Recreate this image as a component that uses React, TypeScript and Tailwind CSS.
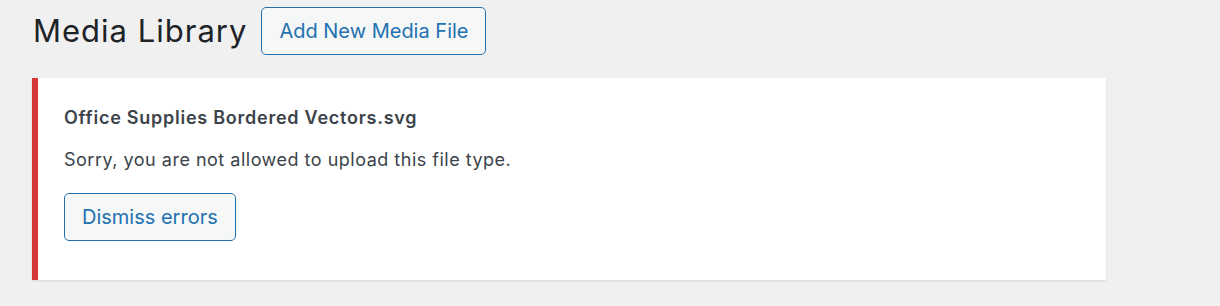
export default function App() {
  return (
    <div
      className="min-h-[306px] w-full bg-[#f0f0f1] pl-[32px] pr-[114px] pt-[7px]"
      style={{ fontFamily: 'Inter, "Liberation Sans", Arial, sans-serif' }}
    >
      <div className="flex items-start gap-[14px]">
        <h1 className="ml-[1px] text-[31px] leading-[47px] tracking-[1px] font-normal text-[#1d2327]">
          Media Library
        </h1>
        <button className="h-[48px] rounded-[5px] border border-[#2271b1] bg-[#f6f7f7] px-[17px] text-[20px] text-[#2271b1]">
          Add New Media File
        </button>
      </div>

      <div className="mt-[23px] border-l-[6px] border-[#d63638] bg-white pb-[39px] pl-[26px] pt-[28px] shadow-[0_1px_2px_rgba(0,0,0,0.1)]">
        <p className="text-[18px] leading-[24px] tracking-[0.75px] font-semibold text-[#3c434a]">
          Office Supplies Bordered Vectors.svg
        </p>
        <p className="mt-[18px] text-[18px] leading-[24px] tracking-[0.5px] text-[#3c434a]">
          Sorry, you are not allowed to upload this file type.
        </p>
        <button className="mt-[21px] h-[48px] rounded-[5px] border border-[#2271b1] bg-[#f6f7f7] px-[17px] text-[20px] text-[#2271b1]">
          Dismiss errors
        </button>
      </div>
    </div>
  );
}
